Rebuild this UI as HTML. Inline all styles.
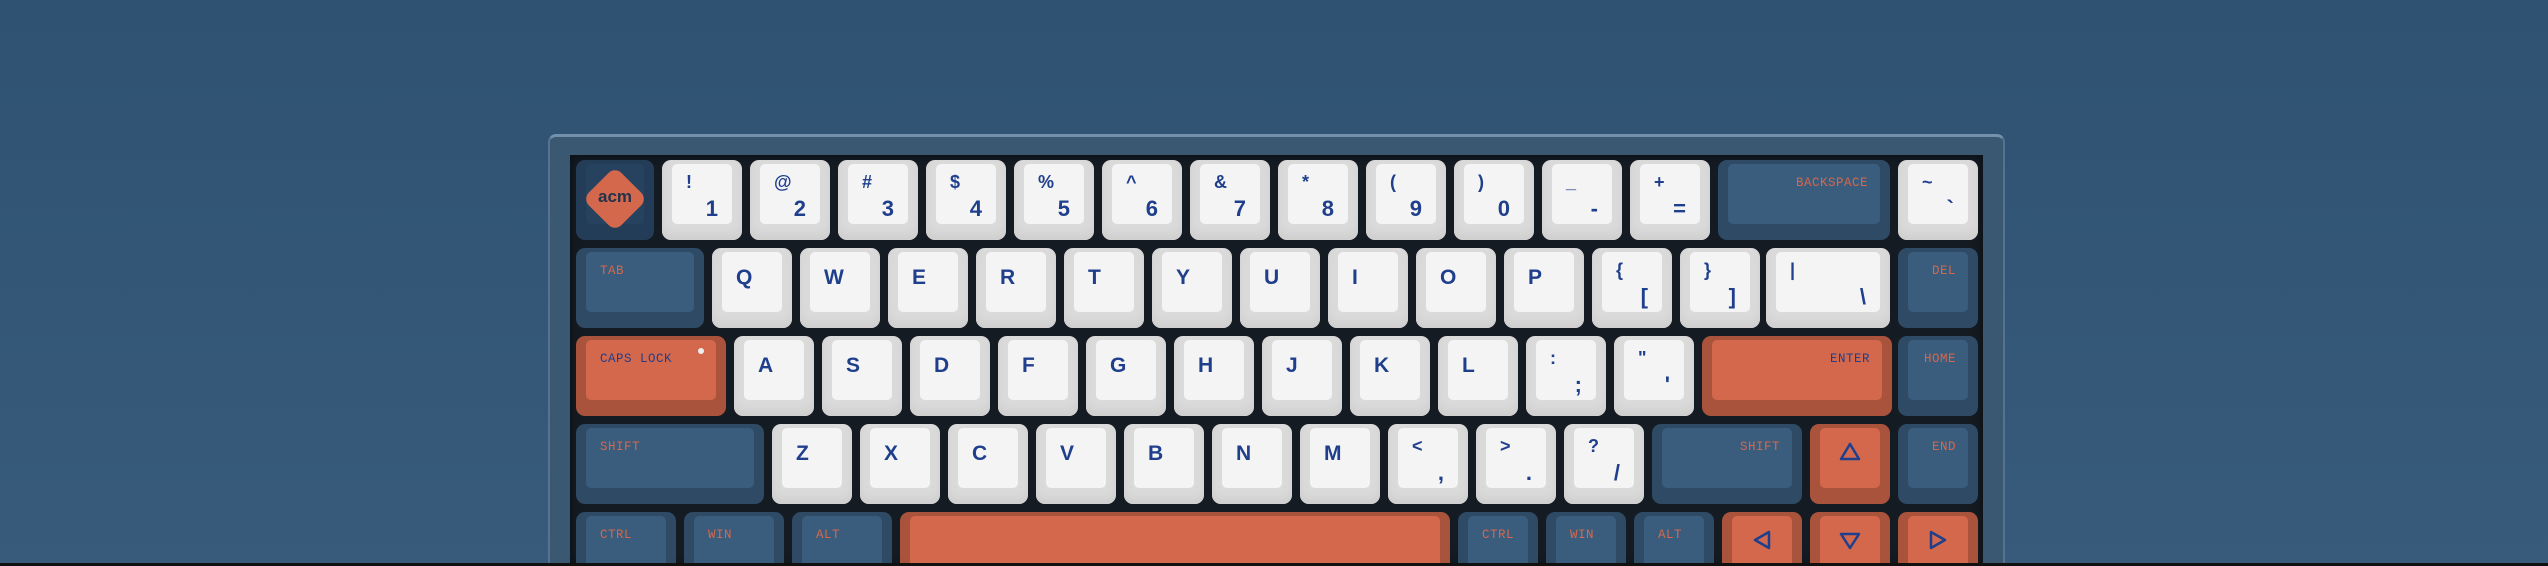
<!DOCTYPE html>
<html><head><meta charset="utf-8"><style>
html,body{margin:0;padding:0;width:2548px;height:566px;overflow:hidden}
body{position:relative;background:linear-gradient(#2f5272,#385b7b);font-family:"Liberation Sans",sans-serif}
#wrap{position:absolute;left:0;top:0;width:2548px;height:566px;overflow:hidden}
.frame{position:absolute;left:548px;top:134px;width:1457px;height:432px;background:#3a5872;border-radius:8px 8px 0 0;border-top:3px solid #7390ad;border-left:2px solid #55728f;border-right:2px solid #55728f;box-sizing:border-box}
.plate{position:absolute;left:570px;top:155px;width:1413px;height:411px;background:#141b23;box-shadow:inset 0 0 12px #0a0e13}
.k{position:absolute;height:80px;border-radius:9px;box-sizing:border-box}
.k .t{position:absolute;left:10px;right:10px;top:4px;height:60px;border-radius:5px}
.w{background:#dadada;box-shadow:inset 0 -6px 8px #cfcfcf}
.w .t{background:#f4f4f4}
.b{background:#2e4a65}
.b .t{background:#3b5d7d}
.o{background:#a9533d}
.o .t{background:#d4684c}
.s{position:absolute;left:14px;top:8px;color:#1f3f8c;font-size:18px;font-weight:bold}
.n{position:absolute;right:14px;top:32px;color:#1f3f8c;font-size:22px;font-weight:bold}
.l{position:absolute;left:14px;top:14px;color:#1f3f8c;font-size:21px;font-weight:bold}
.m{position:absolute;left:14px;top:12px;color:#d4684c;font-size:12.5px;font-family:"Liberation Mono",monospace;letter-spacing:.5px}
.o .m{color:#1f3f8c}
.r{left:auto;right:12px}
.bl{position:absolute;left:0;right:0;top:563px;height:3px;background:#111}
</style></head><body>
<div id="wrap">
<div class="frame"></div><div class="plate"></div>
<div id="kb"></div>
<div class="bl"></div>
</div>
<script>
var kb=document.getElementById('kb'),h='';
function key(x,y,w,c,inner){h+='<div class="k '+c+'" style="left:'+x+'px;top:'+y+'px;width:'+w+'px"><div class="t">'+(inner||'')+'</div></div>';}
h+='<div class="k b" style="left:576px;top:160px;width:78px;background:#233d58"><div class="t" style="background:#27425f"></div><div style="position:absolute;left:16px;top:16px;width:46px;height:46px;background:#d4684c;border-radius:9px;transform:rotate(45deg)"></div><div style="position:absolute;left:0;width:78px;top:27px;text-align:center;color:#23334a;font-weight:bold;font-size:17px">acm</div></div>';
var r0=[['!','1'],['@','2'],['#','3'],['$','4'],['%','5'],['^','6'],['&amp;','7'],['*','8'],['(','9'],[')','0'],['_','-'],['+','=']];
r0.forEach(function(p,i){key(662+i*88,160,80,'w','<span class="s">'+p[0]+'</span><span class="n">'+p[1]+'</span>');});
key(1718,160,172,'b','<span class="m r">BACKSPACE</span>');
key(1898,160,80,'w','<span class="s">~</span><span class="n">`</span>');
key(576,248,128,'b','<span class="m">TAB</span>');
'QWERTYUIOP'.split('').forEach(function(c,i){key(712+i*88,248,80,'w','<span class="l">'+c+'</span>');});
key(1592,248,80,'w','<span class="s">{</span><span class="n">[</span>');
key(1680,248,80,'w','<span class="s">}</span><span class="n">]</span>');
key(1766,248,124,'w','<span class="s">|</span><span class="n">\\</span>');
key(1898,248,80,'b','<span class="m r">DEL</span>');
key(576,336,150,'o','<span class="m">CAPS LOCK</span><span style="position:absolute;right:12px;top:8px;width:6px;height:6px;border-radius:3px;background:#eee"></span>');
'ASDFGHJKL'.split('').forEach(function(c,i){key(734+i*88,336,80,'w','<span class="l">'+c+'</span>');});
key(1526,336,80,'w','<span class="s">:</span><span class="n">;</span>');
key(1614,336,80,'w','<span class="s">&quot;</span><span class="n">\'</span>');
key(1702,336,190,'o','<span class="m r">ENTER</span>');
key(1898,336,80,'b','<span class="m r">HOME</span>');
key(576,424,188,'b','<span class="m">SHIFT</span>');
'ZXCVBNM'.split('').forEach(function(c,i){key(772+i*88,424,80,'w','<span class="l">'+c+'</span>');});
[['&lt;',','],['&gt;','.'],['?','/']].forEach(function(p,i){key(1388+i*88,424,80,'w','<span class="s">'+p[0]+'</span><span class="n">'+p[1]+'</span>');});
key(1652,424,150,'b','<span class="m r">SHIFT</span>');
var tri=function(d){return '<svg style="position:absolute;left:18px;top:12px" width="24" height="24" viewBox="0 0 24 24"><path d="'+d+'" fill="none" stroke="#1f3f8c" stroke-width="2.5" stroke-linejoin="round"/></svg>';};
key(1810,424,80,'o',tri('M12 4 L21 19 L3 19 Z'));
key(1898,424,80,'b','<span class="m r">END</span>');
key(576,512,100,'b','<span class="m">CTRL</span>');
key(684,512,100,'b','<span class="m">WIN</span>');
key(792,512,100,'b','<span class="m">ALT</span>');
key(900,512,550,'o','');
key(1458,512,80,'b','<span class="m">CTRL</span>');
key(1546,512,80,'b','<span class="m">WIN</span>');
key(1634,512,80,'b','<span class="m">ALT</span>');
key(1722,512,80,'o',tri('M19 4 L19 20 L5 12 Z'));
key(1810,512,80,'o',tri('M3 6 L21 6 L12 20 Z'));
key(1898,512,80,'o',tri('M5 4 L5 20 L19 12 Z'));
kb.innerHTML=h;
</script>
</body></html>
